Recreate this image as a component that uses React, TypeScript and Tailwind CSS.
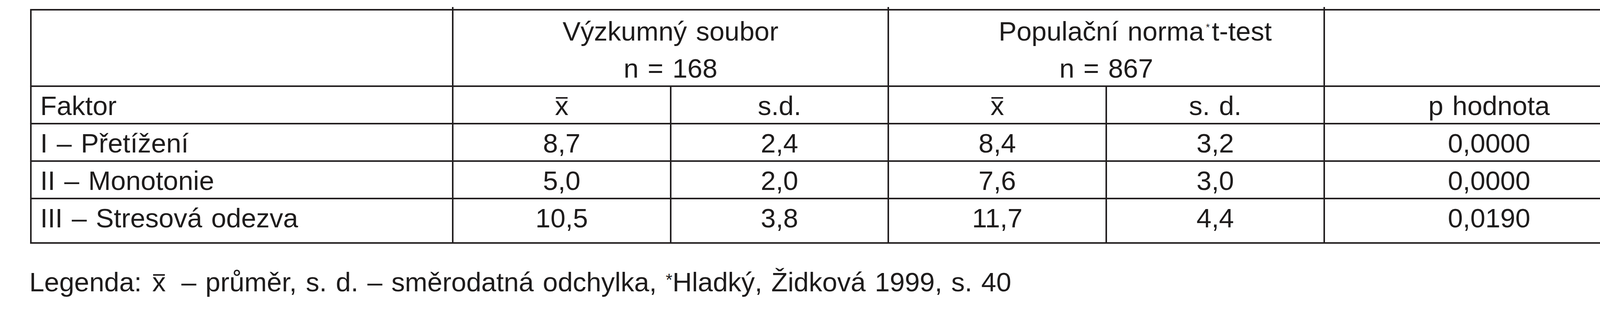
import React from "react";

const cell = "border-r-4 border-b-4 border-[#231f20]";
const body = `${cell} pt-[3px] leading-[92px]`;

function XBar({ legend = false }: { legend?: boolean }) {
  return (
    <span className="relative inline-block leading-none">
      x
      <span
        className={
          "absolute left-[2px] right-[2px] h-[4px] bg-[#231f20] " +
          (legend ? "top-[14px]" : "top-[12px]")
        }
      />
    </span>
  );
}

function Tick() {
  return <span className="absolute -top-[9px] -right-[4px] h-[9px] w-[4px] bg-[#231f20]" />;
}

const rows: [string, string, string, string, string, string][] = [
  ["I – Přetížení", "8,7", "2,4", "8,4", "3,2", "0,0000"],
  ["II – Monotonie", "5,0", "2,0", "7,6", "3,0", "0,0000"],
  ["III – Stresová odezva", "10,5", "3,8", "11,7", "4,4", "0,0190"],
];

export default function App() {
  return (
    <div
      className="w-[4261px] h-[800px] bg-white text-[#1e1c1c] text-[69px] [word-spacing:4px]"
      style={{ fontFamily: '"Liberation Sans", Arial, Helvetica, sans-serif' }}
    >
      <div className="flex flex-col pt-[23px] pl-[77px]">
        <div className="grid w-[4133px] grid-cols-[1080px_558px_557px_558px_558px_818px] grid-rows-[196px_96px_96px_96px_114px] border-l-4 border-t-4 border-[#231f20]">
          {/* header row 1 */}
          <div className={`${cell} relative`}>
            <Tick />
          </div>
          <div className={`${cell} relative col-span-2 pt-[6px] leading-[95px] text-center`}>
            <Tick />
            <div>Výzkumný soubor</div>
            <div>n = 168</div>
          </div>
          <div className={`${cell} relative col-span-2 pt-[6px] leading-[95px] text-center`}>
            <Tick />
            <div className="pl-[148px]">
              Populační norma
              <span className="inline-block px-[5px] text-[26px] leading-none align-[25px]">*</span>
              t-test
            </div>
            <div>n = 867</div>
          </div>
          <div className={cell} />

          {/* header row 2 */}
          <div className={`${body} pl-[22px]`}>Faktor</div>
          <div className={`${body} text-center`}>
            <XBar />
          </div>
          <div className={`${body} text-center`}>s.d.</div>
          <div className={`${body} text-center`}>
            <XBar />
          </div>
          <div className={`${body} text-center`}>s. d.</div>
          <div className={`${body} text-center pl-[26px]`}>p hodnota</div>

          {rows.map((r) => (
            <React.Fragment key={r[0]}>
              <div className={`${body} pl-[22px] whitespace-nowrap`}>{r[0]}</div>
              <div className={`${body} text-center`}>{r[1]}</div>
              <div className={`${body} text-center`}>{r[2]}</div>
              <div className={`${body} text-center`}>{r[3]}</div>
              <div className={`${body} text-center`}>{r[4]}</div>
              <div className={`${body} text-center pl-[26px]`}>{r[5]}</div>
            </React.Fragment>
          ))}
        </div>

        <p className="-ml-[2px] mt-[59px] leading-[80px] whitespace-nowrap">
          Legenda:
          <span className="ml-[27px] mr-[40px]">
            <XBar legend />
          </span>
          – průměr, s. d. – směrodatná odchylka,{" "}
          <span className="inline-block text-[44px] leading-none align-[14px]">*</span>
          Hladký, Židková 1999, s. 40
        </p>
      </div>
    </div>
  );
}
